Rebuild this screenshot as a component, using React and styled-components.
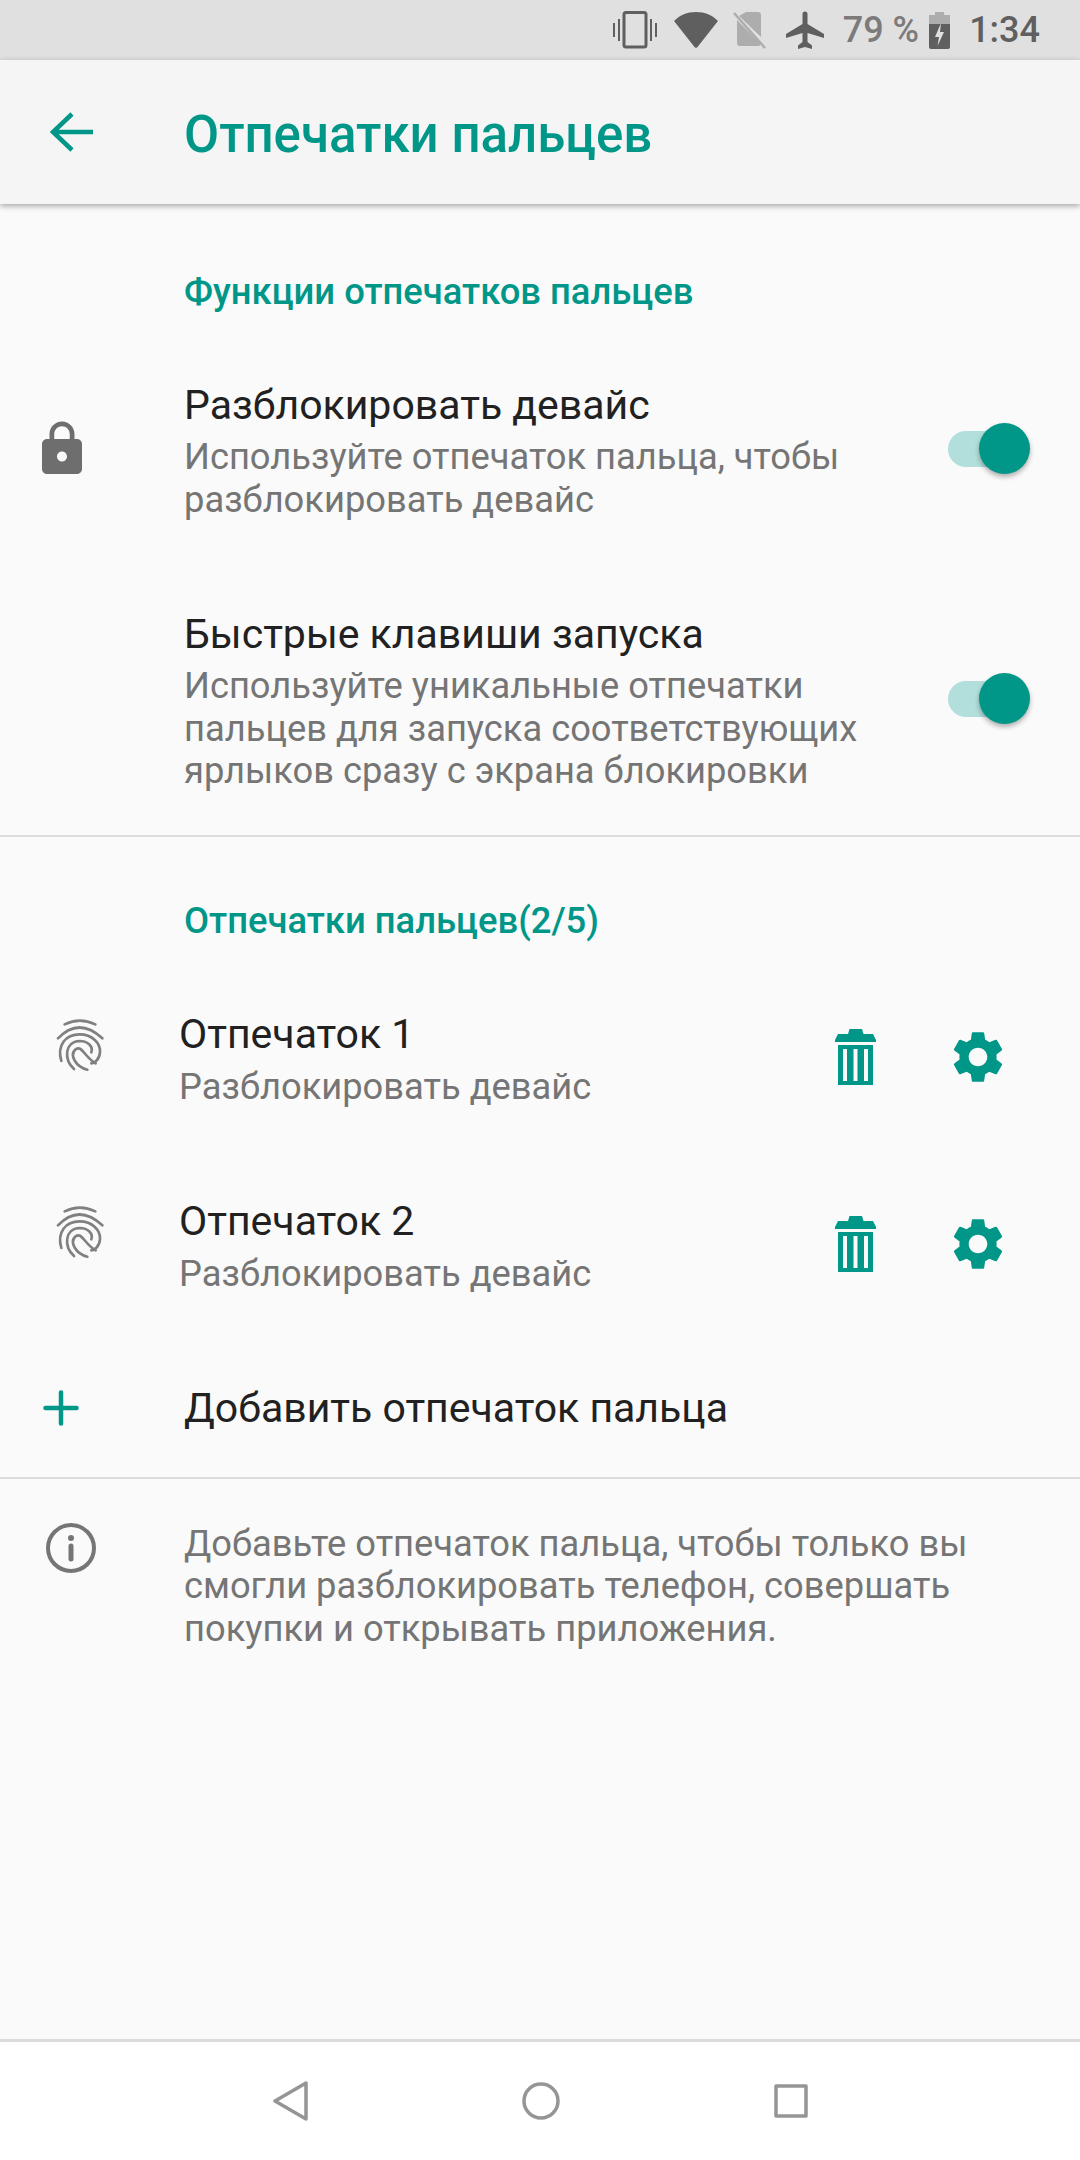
import React from "react";
import styled, { createGlobalStyle } from "styled-components";

const Global = createGlobalStyle`
  html, body { margin: 0; padding: 0; background: #fafafa; }
  * { box-sizing: border-box; }
  body { font-family: Roboto, "Noto Sans", sans-serif; }
`;
const TEAL = "#009688";

const Screen = styled.div`
  width: 1080px; height: 2160px; display: flex; flex-direction: column; background: #fafafa; overflow: hidden;
`;
const StatusBar = styled.div`
  height: 60px; background: #e0e0e0; display: flex; align-items: center; justify-content: flex-end; padding-right: 40px; flex: none;
`;
const StatusText = styled.span`
  font-size: ${p => p.$size}px; font-weight: 500; color: ${p => p.$color}; line-height: 60px; margin: 0 ${p => p.$mr || 0}px 0 ${p => p.$ml || 0}px;
`;
const StatusIcon = styled.svg`
  display: block; flex: none; margin-left: ${p => p.$ml || 0}px; fill: ${p => p.$fill || "#5f5f5f"};
`;
const Toolbar = styled.header`
  height: 144px; flex: none; background: #f5f5f5; display: flex; align-items: center; position: relative; z-index: 1;
  box-shadow: 0 2px 6px rgba(0,0,0,.35);
`;
const BackIcon = styled.svg`
  display: block; margin-left: 50px; width: 44px; height: 44px; flex: none;
`;
const Title = styled.h1`
  margin: 6px 0 0 90px; font-size: 51px; line-height: 56px; font-weight: 500; color: ${TEAL}; white-space: nowrap;
`;
const Section = styled.section`
  padding-top: ${p => p.$top}px;
  border-bottom: ${p => p.$line ? "2px solid #dcdcdc" : "none"};
`;
const SectionTitle = styled.h2`
  margin: 0 0 ${p => p.$mb}px 184px; font-size: 36.4px; line-height: 44px; font-weight: 500; color: ${TEAL};
`;
const Row = styled.div`
  display: flex; align-items: center; padding: ${p => p.$pt}px 32px ${p => p.$pb}px 0;
`;
const LeadIcon = styled.div`
  width: ${p => p.$w}px; flex: none; display: flex; justify-content: flex-start; padding-left: ${p => p.$pl || 0}px; margin-bottom: ${p => p.$mb || 0}px;
`;
const Body = styled.div`
  flex: 1; min-width: 0;
`;
const ItemTitle = styled.div`
  font-size: 41px; line-height: 48px; color: #212121; margin-bottom: ${p => p.$gap || 7}px;
`;
const ItemSub = styled.div`
  font-size: 36.3px; line-height: 42.5px; color: #757575;
`;
const Track = styled.div`
  width: 76px; height: 36px; border-radius: 18px; background: #b2dfdb; position: relative; flex: none; margin: 0 24px 5px 0;
`;
const Thumb = styled.div`
  position: absolute; right: -6px; top: -8px; width: 51px; height: 51px; border-radius: 50%; background: ${TEAL};
  box-shadow: 0 3px 5px rgba(0,0,0,.3);
`;
const FingerRow = styled.div`
  display: flex; align-items: center; height: 98px;
`;
const Actions = styled.div`
  display: flex; align-items: center; gap: 77px; margin-right: 77px; flex: none; margin-top: -6px;
`;
const PlainLabel = styled.div`
  font-size: 41px; line-height: 48px; color: #212121;
`;
const InfoText = styled.div`
  font-size: 36.3px; line-height: 42.5px; color: #757575;
`;
const InfoRow = styled.div`
  display: flex; align-items: flex-start; padding-top: 44px; flex: 1;
`;
const NavBar = styled.nav`
  height: 121px; flex: none; background: #fff; border-top: 3px solid #dcdcdc; display: flex; align-items: center; justify-content: center; gap: 214px;
`;

const gear = "M19.14 12.94c.04-.3.06-.61.06-.94 0-.32-.02-.64-.07-.94l2.03-1.58a.49.49 0 0 0 .12-.61l-1.92-3.32a.488.488 0 0 0-.59-.22l-2.39.96c-.5-.38-1.03-.7-1.62-.94l-.36-2.54a.484.484 0 0 0-.48-.41h-3.84c-.24 0-.43.17-.47.41l-.36 2.54c-.59.24-1.13.57-1.62.94l-2.39-.96c-.22-.08-.47 0-.59.22L2.74 8.87c-.12.21-.08.47.12.61l2.03 1.58c-.05.3-.09.63-.09.94s.02.64.07.94l-2.03 1.58a.49.49 0 0 0-.12.61l1.92 3.32c.12.22.37.29.59.22l2.39-.96c.5.38 1.03.7 1.62.94l.36 2.54c.05.24.24.41.48.41h3.84c.24 0 .44-.17.47-.41l.36-2.54c.59-.24 1.13-.56 1.62-.94l2.39.96c.22.08.47 0 .59-.22l1.92-3.32c.12-.22.07-.47-.12-.61l-2.01-1.58zM12 15.6c-1.98 0-3.6-1.62-3.6-3.6s1.62-3.6 3.6-3.6 3.6 1.62 3.6 3.6-1.62 3.6-3.6 3.6z";

const Fingerprint = () => (
  <svg width="54" height="56" viewBox="160 100 162 168" fill="none" stroke="#808080" strokeWidth="8" strokeLinecap="round" style={{ display: "block" }}>
    <path d="M192 128 Q237 106 284 128" />
    <path d="M172 170 Q235 105 305 170" />
    <path d="M182 238 C168 190 195 158 237 158 C275 158 300 185 298 212 C296 235 280 245 272 245" />
    <path d="M220 262 C190 235 190 180 237 178 C262 178 278 195 272 212" />
    <path d="M260 264 C225 255 205 220 225 203 C245 190 250 225 285 245" />
  </svg>
);
const Trash = () => (
  <svg width="41" height="56" viewBox="0 0 41 56" fill={TEAL} style={{ display: "block" }}>
    <path d="M13 5 L14.5 0 H27 L28.5 5 Z" />
    <path d="M3 5 H38 L41 11 V13 H0 V11 Z" />
    <path fillRule="evenodd" d="M3 16 H38 V56 H3 Z M8 20 V52 H12 V20 Z M18.500 20 V52 H22.500 V20 Z M29 20 V52 H33 V20 Z" />
  </svg>
);
const Gear = () => (
  <svg width="62" height="62" viewBox="0 0 24 24" fill={TEAL} style={{ display: "block", margin: "-3px -6px" }}><path d={gear} /></svg>
);
const FingerItem = ({ title }) => (
  <FingerRow>
    <LeadIcon $w={179} $pl={54} $mb={34}><Fingerprint /></LeadIcon>
    <Body>
      <ItemTitle $gap={8}>{title}</ItemTitle>
      <ItemSub>Разблокировать девайс</ItemSub>
    </Body>
    <Actions><Trash /><Gear /></Actions>
  </FingerRow>
);

export default function App() {
  return (
    <Screen>
      <Global />
      <StatusBar>
        <StatusIcon width="44" height="38" viewBox="0 0 44 38">
          <path fill="none" stroke="#5f5f5f" strokeWidth="3" d="M13 1.500 H31 a2 2 0 0 1 2 2 V34 a2 2 0 0 1 -2 2 H13 a2 2 0 0 1 -2 -2 V3.500 a2 2 0 0 1 2 -2 Z" />
          <path d="M0 12h2v14H0zM5 8h2v22H5zM37 8h2v22h-2zM42 12h2v14h-2z" />
        </StatusIcon>
        <StatusIcon $ml={17} width="44" height="36" viewBox="0 0 44 36">
          <path d="M22 0 C31 0 38 3 44 9 L23.500 35 a2 2 0 0 1 -3 0 L0 9 C6 3 13 0 22 0 Z" />
        </StatusIcon>
        <StatusIcon $ml={15} width="33" height="38" viewBox="0 0 33 38">
          <path fill="#adadad" d="M13 1 H25 a3 3 0 0 1 3 3 V26 L6 5 Z M4 9 L28 33 a3 3 0 0 1 -3 2 H7 a3 3 0 0 1 -3 -3 Z" />
          <path stroke="#adadad" strokeWidth="2.500" d="M1 2 L32 37" fill="none" />
        </StatusIcon>
        <StatusIcon $ml={20} width="38" height="38" viewBox="0 0 38 38">
          <path d="M16.500 3 a2.500 2.500 0 0 1 5 0 V13 L38 23 V27 L21.500 22 V31 L26 34.500 V38 L19 36 L12 38 V34.500 L16.500 31 V22 L0 27 V23 L16.500 13 Z" />
        </StatusIcon>
        <StatusText $size={36} $color="#7b7b7b" $ml={19} $mr={10}>79 %</StatusText>
        <StatusIcon width="21" height="37" viewBox="0 0 21 37">
          <path fill="#adadad" d="M6 0 H15 V3 H21 V12 H0 V3 H6 Z" />
          <path d="M0 12 H21 V35 a2 2 0 0 1 -2 2 H2 a2 2 0 0 1 -2 -2 Z" />
          <path fill="#e0e0e0" d="M12 11 L6 25 H10 L8.500 34 L15 20 H11 Z" />
        </StatusIcon>
        <StatusText $size={36} $color="#5f5f5f" $ml={19}>1:34</StatusText>
      </StatusBar>
      <Toolbar>
        <BackIcon viewBox="0 0 44 44" fill="none" stroke={TEAL} strokeWidth="4.500">
          <path d="M43 22 H4 M22 4 L3 22 L22 40" />
        </BackIcon>
        <Title>Отпечатки пальцев</Title>
      </Toolbar>
      <Section $top={66} $line>
        <SectionTitle $mb={67}>Функции отпечатков пальцев</SectionTitle>
        <Row $pt={0} $pb={89}>
          <LeadIcon $w={184} $pl={32} $mb={4}>
            <svg width="60" height="60" viewBox="0 0 24 24" fill="#6e6e6e" style={{ display: "block" }}>
              <path d="M18 8h-1V6c0-2.760-2.240-5-5-5S7 3.240 7 6v2H6c-1.100 0-2 .9-2 2v10c0 1.100.9 2 2 2h12c1.100 0 2-.9 2-2V10c0-1.100-.9-2-2-2zm-6 9c-1.100 0-2-.9-2-2s.9-2 2-2 2 .9 2 2-.9 2-2 2zm3.100-9H8.900V6c0-1.710 1.390-3.100 3.100-3.100 1.710 0 3.100 1.390 3.100 3.100v2z" />
            </svg>
          </LeadIcon>
          <Body>
            <ItemTitle>Разблокировать девайс</ItemTitle>
            <ItemSub>Используйте отпечаток пальца, чтобы<br />разблокировать девайс</ItemSub>
          </Body>
          <Track><Thumb /></Track>
        </Row>
        <Row $pt={0} $pb={42}>
          <LeadIcon $w={184} />
          <Body>
            <ItemTitle>Быстрые клавиши запуска</ItemTitle>
            <ItemSub>Используйте уникальные отпечатки<br />пальцев для запуска соответствующих<br />ярлыков сразу с экрана блокировки</ItemSub>
          </Body>
          <Track><Thumb /></Track>
        </Row>
      </Section>
      <Section $top={62}>
        <SectionTitle $mb={68}>Отпечатки пальцев(2/5)</SectionTitle>
        <FingerItem title="Отпечаток 1" />
      </Section>
      <Section $top={89}>
        <FingerItem title="Отпечаток 2" />
      </Section>
      <Section $top={88} $line>
        <Row $pt={0} $pb={45}>
          <LeadIcon $w={184} $pl={43}>
            <svg width="36" height="36" viewBox="0 0 36 36" stroke={TEAL} strokeWidth="4.500" strokeLinecap="round" style={{ display: "block" }}>
              <path d="M18 2.500 V33.500 M2.500 18 H33.500" />
            </svg>
          </LeadIcon>
          <PlainLabel>Добавить отпечаток пальца</PlainLabel>
        </Row>
      </Section>
      <InfoRow>
        <LeadIcon $w={184} $pl={46}>
          <svg width="50" height="50" viewBox="0 0 50 50" fill="none" stroke="#757575" strokeWidth="4" style={{ display: "block" }}>
            <circle cx="25" cy="25" r="23" />
            <path d="M25 23 V36" strokeWidth="5" strokeLinecap="round" />
            <circle cx="25" cy="15" r="3" fill="#757575" stroke="none" />
          </svg>
        </LeadIcon>
        <InfoText>Добавьте отпечаток пальца, чтобы только вы<br />смогли разблокировать телефон, совершать<br />покупки и открывать приложения.</InfoText>
      </InfoRow>
      <NavBar>
        <svg width="35" height="40" viewBox="0 0 35 40" fill="none" stroke="#959595" strokeWidth="3.500" strokeLinejoin="round"><path d="M33 2 V38 L2 20 Z" /></svg>
        <svg width="38" height="38" viewBox="0 0 38 38" fill="none" stroke="#959595" strokeWidth="3.500"><circle cx="19" cy="19" r="17" /></svg>
        <svg width="34" height="34" viewBox="0 0 34 34" fill="none" stroke="#959595" strokeWidth="3.500" strokeLinejoin="round"><rect x="2" y="2" width="30" height="30" /></svg>
      </NavBar>
    </Screen>
  );
}
